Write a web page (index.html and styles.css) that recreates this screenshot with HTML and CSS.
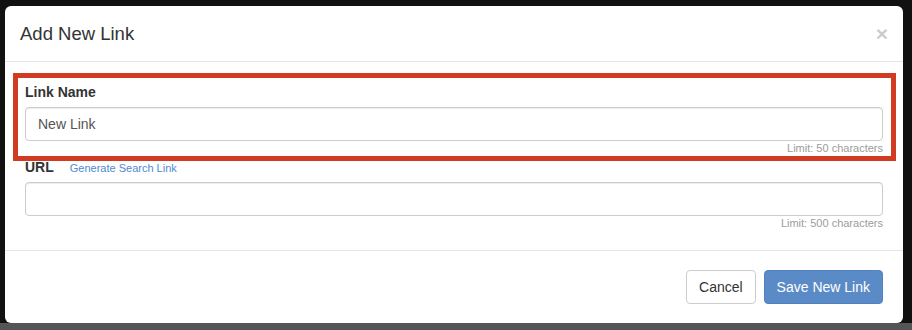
FILE: index.html
```html
<!DOCTYPE html>
<html lang="en">
<head>
<meta charset="utf-8">
<title>Add New Link</title>
<link rel="stylesheet" href="styles.css">
</head>
<body>
<div class="page">
  <div class="modal">
    <div class="modal-header">
      <h4 class="modal-title">Add New Link</h4>
      <button class="close" type="button" aria-label="Close">&times;</button>
    </div>
    <div class="modal-body">
      <div class="form-group highlighted">
        <label class="control-label" for="link-name">Link Name</label>
        <input class="form-control" id="link-name" type="text" value="New Link">
        <div class="help-block">Limit: 50 characters</div>
      </div>
      <div class="form-group">
        <div class="label-row">
          <label class="control-label" for="link-url">URL</label>
          <a class="gen-link" href="#">Generate Search Link</a>
        </div>
        <input class="form-control" id="link-url" type="text" value="">
        <div class="help-block">Limit: 500 characters</div>
      </div>
    </div>
    <div class="modal-footer">
      <button class="btn btn-default" type="button">Cancel</button>
      <button class="btn btn-primary" type="button">Save New Link</button>
    </div>
  </div>
</div>
</body>
</html>
```
FILE: styles.css
```css
* { box-sizing: border-box; }
html, body { margin: 0; padding: 0; }
body {
  width: 912px;
  height: 330px;
  overflow: hidden;
  font-family: "Liberation Sans", Arial, Helvetica, sans-serif;
  font-size: 14px;
  line-height: 1.42857;
  color: #333;
  background: linear-gradient(to bottom, #111111 0, #111111 323px, #555555 323px, #555555 100%);
}
.page {
  padding: 6px 0 0 5px;
}
.modal {
  width: 898px;
  background: #fff;
  border-radius: 6px;
}
.modal-header {
  display: flex;
  align-items: center;
  justify-content: space-between;
  padding: 15px 15px 14px 15px;
  border-bottom: 1px solid #e5e5e5;
}
.modal-title {
  margin: 0;
  font-size: 18.5px;
  font-weight: normal;
  line-height: 25.7px;
  color: #333;
}
.close {
  border: 0;
  background: transparent;
  padding: 0;
  margin: -1px 0 0 0;
  font-family: "Liberation Sans", Arial, sans-serif;
  font-size: 21px;
  font-weight: bold;
  line-height: 1;
  color: #000;
  opacity: 0.2;
  cursor: pointer;
}
.modal-body {
  padding: 20px 20px 19px 20px;
}
.form-group {
  margin-bottom: 1px;
}
.form-group:last-child {
  margin-bottom: 0;
}
.highlighted {
  position: relative;
}
.highlighted::after {
  content: "";
  position: absolute;
  top: -9px;
  bottom: -5px;
  left: -12px;
  right: -13px;
  border: 5px solid #d03b22;
  pointer-events: none;
}
.control-label {
  display: inline-block;
  margin-bottom: 5px;
  font-weight: bold;
  font-size: 14px;
  line-height: 20px;
  color: #333;
}
.label-row {
  display: flex;
  align-items: baseline;
  gap: 16px;
}
.gen-link {
  font-size: 11px;
  color: #4f8ad0;
  text-decoration: none;
}
.form-control {
  display: block;
  width: 100%;
  height: 34px;
  padding: 6px 12px;
  font-family: "Liberation Sans", Arial, sans-serif;
  font-size: 14px;
  line-height: 1.42857;
  color: #555;
  background: #fff;
  border: 1px solid #ccc;
  border-radius: 4px;
  box-shadow: inset 0 1px 1px rgba(0, 0, 0, 0.075);
  outline: none;
}
.help-block {
  text-align: right;
  font-size: 11px;
  line-height: 15px;
  color: #9c9c9c;
}
.modal-footer {
  display: flex;
  justify-content: flex-end;
  gap: 8px;
  padding: 19px 20px 19px 20px;
  border-top: 1px solid #e5e5e5;
}
.btn {
  display: inline-block;
  height: 34px;
  padding: 6px 12px;
  font-family: "Liberation Sans", Arial, sans-serif;
  font-size: 14px;
  line-height: 20px;
  border: 1px solid transparent;
  border-radius: 4px;
  cursor: pointer;
}
.btn-default {
  color: #333;
  background: #fff;
  border-color: #ccc;
}
.btn-primary {
  color: #fff;
  background: #5b8bc7;
  border-color: #5182c0;
}
```
